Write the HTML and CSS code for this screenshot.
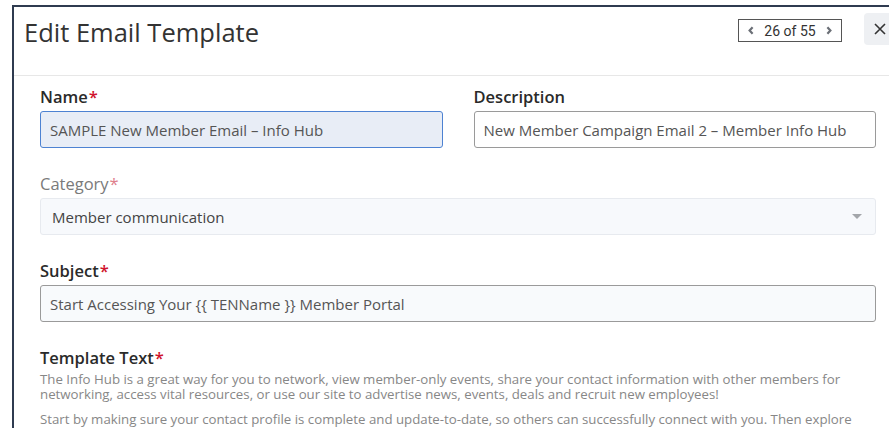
FILE: index.html
```html
<!DOCTYPE html>
<html lang="en">
<head>
<meta charset="utf-8">
<title>Edit Email Template</title>
<link rel="stylesheet" href="styles.css">
</head>
<body>
<div class="modal">
  <header class="modal-header">
    <h1 class="modal-title">Edit Email Template</h1>
    <div class="pager">
      <button class="pager-btn" aria-label="Previous">
        <svg width="6" height="9" viewBox="0 0 6 9"><path d="M4.6 1.2 1.6 4.5 4.6 7.8" fill="none" stroke="currentColor" stroke-width="2.2"/></svg>
      </button>
      <span class="pager-count">26 of 55</span>
      <button class="pager-btn" aria-label="Next">
        <svg width="6" height="9" viewBox="0 0 6 9"><path d="M1.4 1.2 4.4 4.5 1.4 7.8" fill="none" stroke="currentColor" stroke-width="2.2"/></svg>
      </button>
    </div>
    <button class="close-btn" aria-label="Close">
      <svg width="12" height="12" viewBox="0 0 12 12"><path d="M1 1 11 11M11 1 1 11" stroke="currentColor" stroke-width="1.6"/></svg>
    </button>
  </header>

  <form class="form">
    <div class="row-2">
      <div class="field">
        <label class="label">Name<span class="req">*</span></label>
        <input class="input input-focus" type="text" value="SAMPLE New Member Email – Info Hub">
      </div>
      <div class="field">
        <label class="label">Description</label>
        <input class="input" type="text" value="New Member Campaign Email 2 – Member Info Hub">
      </div>
    </div>

    <div class="field">
      <label class="label label-disabled">Category<span class="req">*</span></label>
      <div class="select">
        <span>Member communication</span>
        <span class="caret"></span>
      </div>
    </div>

    <div class="field">
      <label class="label">Subject<span class="req">*</span></label>
      <input class="input input-soft" type="text" value="Start Accessing Your {{ TENName }} Member Portal">
    </div>

    <div class="field">
      <label class="label">Template Text<span class="req">*</span></label>
      <div class="template-text">
        <p>The Info Hub is a great way for you to network, view member-only events, share your contact information with other members for networking, access vital resources, or use our site to advertise news, events, deals and recruit new employees!</p>
        <p>Start by making sure your contact profile is complete and update-to-date, so others can successfully connect with you. Then explore the member directory, upcoming events and resources available to you.</p>
      </div>
    </div>
  </form>
</div>
</body>
</html>
```
FILE: styles.css
```css
html, body {
  margin: 0;
  padding: 0;
  background: #fff;
  overflow: hidden;
}

body {
  font-family: "Open Sans", "Noto Sans", sans-serif;
  color: #222;
}

.modal {
  box-sizing: border-box;
  margin: 5px 0 0 12px;
  width: 890px;
  background: #fff;
  border-top: 2px solid #2f3b50;
  border-left: 2px solid #2f3b50;
}

/* header */
.modal-header {
  display: flex;
  align-items: flex-start;
  height: 68px;
  padding: 0 6px 0 10px;
  border-bottom: 1px solid #e7e7e7;
}

.modal-title {
  flex: 1;
  margin: 13px 0 0;
  font-size: 25.5px;
  font-weight: 400;
  color: #333;
  line-height: 1;
}

.pager {
  display: flex;
  align-items: center;
  justify-content: space-between;
  height: 23px;
  width: 104px;
  box-sizing: border-box;
  margin: 12px 22px 0 0;
  padding: 0 9px 0 9px;
  border: 1px solid #555;
  background: #fff;
}

.pager-btn {
  display: flex;
  align-items: center;
  padding: 0;
  border: 0;
  background: none;
  color: #6b6f76;
}

.pager-count {
  font-family: Roboto, "Liberation Sans", sans-serif;
  font-size: 14px;
  color: #333;
}

.close-btn {
  display: flex;
  align-items: center;
  justify-content: center;
  width: 32px;
  height: 32px;
  margin-top: 6px;
  padding: 0;
  border: 0;
  border-radius: 4px;
  background: #eef0f3;
  color: #333;
}

/* form */
.form {
  padding: 10px 26px 0 26px;
  display: flex;
  flex-direction: column;
  gap: 25px;
}

.row-2 {
  display: grid;
  grid-template-columns: 1fr 1fr;
  column-gap: 31px;
}

.field {
  display: flex;
  flex-direction: column;
}

.label {
  font-size: 16.5px;
  font-weight: 600;
  line-height: 22px;
  color: #2a2a2a;
  margin-bottom: 3px;
}

.label-disabled {
  color: #7a7a7a;
  font-weight: 400;
}

.req {
  color: #d0142c;
  margin-left: 1px;
}

.label-disabled .req {
  color: #de7f8b;
}

.input {
  box-sizing: border-box;
  height: 37px;
  width: 100%;
  padding: 0 9px;
  font-family: inherit;
  font-size: 15px;
  color: #555;
  background: #fff;
  border: 1px solid #9a9a9a;
  border-radius: 3px;
  outline: none;
}

.input-focus {
  background: #e8edf6;
  border: 1px solid #4d82d2;
}

.input-soft {
  background: #f8fafc;
}

.select {
  box-sizing: border-box;
  height: 37px;
  display: flex;
  align-items: center;
  justify-content: space-between;
  padding: 0 13px 0 11px;
  font-size: 15px;
  color: #444;
  background: #f7f9fc;
  border: 1px solid #e7eaef;
  border-radius: 3px;
}

.caret {
  width: 0;
  height: 0;
  border-left: 5px solid transparent;
  border-right: 5px solid transparent;
  border-top: 5px solid #a3a6aa;
}

.template-text {
  padding-right: 16px;
  font-size: 13.25px;
  line-height: 15px;
  color: #878787;
}

.template-text p {
  margin: 0 0 10px;
}
```
